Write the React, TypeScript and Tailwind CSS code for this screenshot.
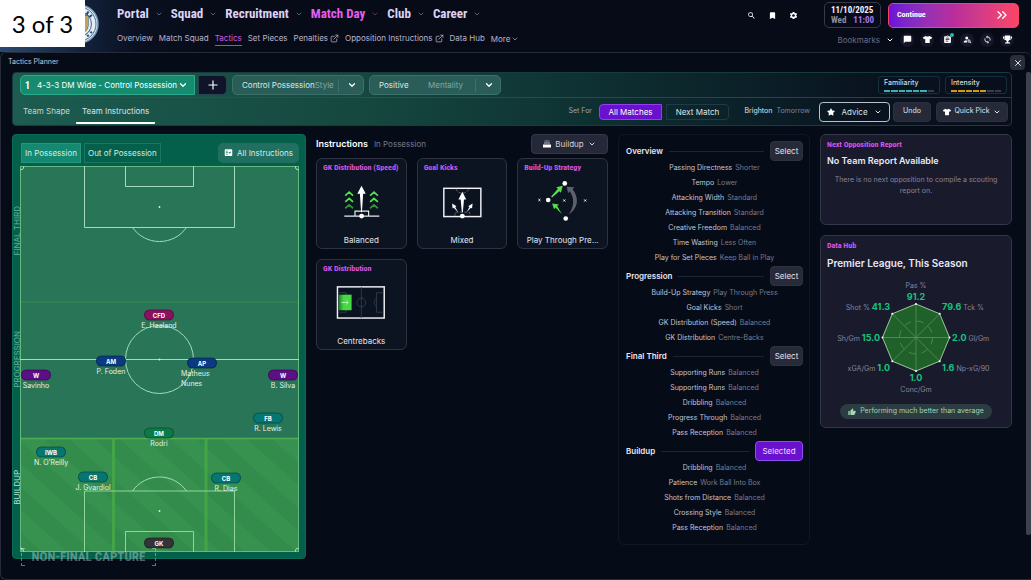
import React from 'react';
import { ChevronDown, ChevronsRight, ExternalLink, Plus, X } from 'lucide-react';
import {
  MdAssignment,
  MdBookmark,
  MdChatBubble,
  MdFactCheck,
  MdOutlineSync,
  MdPersonSearch,
  MdSearch,
  MdSettings,
  MdThumbUp,
} from 'react-icons/md';
import { FaStar, FaTrophy, FaTshirt } from 'react-icons/fa';

const condensed = "font-['Liberation_Sans_Narrow','Roboto_Condensed',sans-serif] font-bold";

const mainNav = ['Portal', 'Squad', 'Recruitment', 'Match Day', 'Club', 'Career'];

const subNav = [
  { label: 'Overview' },
  { label: 'Match Squad' },
  { label: 'Tactics', active: true },
  { label: 'Set Pieces' },
  { label: 'Penalties', external: true },
  { label: 'Opposition Instructions', external: true },
  { label: 'Data Hub' },
];

interface Player {
  role: string;
  name?: string;
  color: string;
  x: number;
  y: number;
  wrap?: boolean;
}

const PITCH_W = 279;
const PITCH_H = 386;

const players: Player[] = [
  { role: 'CFD', name: 'E. Haaland', color: 'bg-[#8a1060]', x: 139, y: 149 },
  { role: 'AM', name: 'P. Foden', color: 'bg-[#0a3a80]', x: 91, y: 195 },
  { role: 'AP', name: 'Matheus Nunes', color: 'bg-[#0a3a80]', x: 182, y: 197, wrap: true },
  { role: 'W', name: 'Savinho', color: 'bg-[#5c0f86]', x: 16, y: 209 },
  { role: 'W', name: 'B. Silva', color: 'bg-[#5c0f86]', x: 263, y: 209 },
  { role: 'FB', name: 'R. Lewis', color: 'bg-[#067672]', x: 248, y: 252 },
  { role: 'DM', name: 'Rodri', color: 'bg-[#0b7a48]', x: 139, y: 267 },
  { role: 'IWB', name: "N. O'Reilly", color: 'bg-[#067672]', x: 31, y: 286 },
  { role: 'CB', name: 'J. Gvardiol', color: 'bg-[#067672]', x: 73, y: 311 },
  { role: 'CB', name: 'R. Dias', color: 'bg-[#067672]', x: 206, y: 312 },
  { role: 'GK', color: 'bg-[#333338]', x: 139, y: 377 },
];

const sections = [
  {
    title: 'Overview',
    rows: [
      ['Passing Directness', 'Shorter'],
      ['Tempo', 'Lower'],
      ['Attacking Width', 'Standard'],
      ['Attacking Transition', 'Standard'],
      ['Creative Freedom', 'Balanced'],
      ['Time Wasting', 'Less Often'],
      ['Play for Set Pieces', 'Keep Ball in Play'],
    ],
  },
  {
    title: 'Progression',
    rows: [
      ['Build-Up Strategy', 'Play Through Press'],
      ['Goal Kicks', 'Short'],
      ['GK Distribution (Speed)', 'Balanced'],
      ['GK Distribution', 'Centre-Backs'],
    ],
  },
  {
    title: 'Final Third',
    rows: [
      ['Supporting Runs', 'Balanced'],
      ['Supporting Runs', 'Balanced'],
      ['Dribbling', 'Balanced'],
      ['Progress Through', 'Balanced'],
      ['Pass Reception', 'Balanced'],
    ],
  },
  {
    title: 'Buildup',
    selected: true,
    rows: [
      ['Dribbling', 'Balanced'],
      ['Patience', 'Work Ball Into Box'],
      ['Shots from Distance', 'Balanced'],
      ['Crossing Style', 'Balanced'],
      ['Pass Reception', 'Balanced'],
    ],
  },
];

const ClubBadge = () => (
  <svg viewBox="0 0 40 40" className="h-10 w-10" aria-hidden="true">
    <circle cx="20" cy="20" r="19" fill="#e4edf5" stroke="#6f9cc4" strokeWidth="1.5" />
    <circle cx="20" cy="20" r="17" fill="none" stroke="#24466f" strokeWidth="0.8" />
    <circle cx="20" cy="20" r="12.5" fill="#dfe9f2" stroke="#24466f" strokeWidth="0.8" />
    <path d="M11 11h18v10c0 5-4 8-9 11-5-3-9-6-9-11z" fill="#86b6dc" stroke="#24466f" />
    <path d="M24 12h5v9c0 4-2 6-5 8z" fill="#c9a24c" />
    <g stroke="#24466f" strokeWidth="2">
      <path d="M25 5.500l-1 3M29.500 7.500l-1.800 2.700M33 11l-2.600 2M21 4.500v3" />
      <path d="M25 34.500l-1-3M29.500 32.500l-1.800-2.700M33 29l-2.600-2" strokeDasharray="2 1" />
    </g>
  </svg>
);

const DateBox = () => (
  <div className={`${condensed} flex h-[26px] w-[57px] flex-col justify-center rounded-[5px] border border-[#343a48] px-1.5 text-[9px] leading-[10px]`}>
    <span className="whitespace-nowrap text-[#f2eefc]">11/10/2025</span>
    <span className="flex justify-between text-[#8d8b9e]">
      Wed <span className="text-[#a377f0]">11:00</span>
    </span>
  </div>
);

const RoundButton: React.FC<{ label: string; badge?: boolean; children: React.ReactNode }> = ({ label, badge, children }) => (
  <button aria-label={label} className="relative flex h-3.5 w-3.5 items-center justify-center rounded-full bg-[#16162a] text-[9px]">
    {children}
    {badge && <span className="absolute top-0 right-0 h-1 w-1 rounded-full bg-[#2bb5ae]" />}
  </button>
);

const Header = () => (
  <header className="flex h-[52px] items-start bg-[linear-gradient(90deg,#2b4a70_0,#13233d_80px,#0a1020_135px,#070b18_220px)]">
    <div className="relative h-[52px] w-[117px] shrink-0">
      <div className="absolute top-1 left-[59px]">
        <ClubBadge />
      </div>
      <div className="relative flex h-[47px] w-[85px] items-center justify-center bg-white font-['Lato',sans-serif] text-[24px] text-black">
        3 of 3
      </div>
    </div>

    <div className="flex min-w-0 flex-1 flex-col">
      <nav className={`${condensed} flex h-7 items-center gap-2 text-[13px]`}>
        {mainNav.map((item) => (
          <a
            key={item}
            href="#"
            className={`flex items-center gap-1.5 whitespace-nowrap ${item === 'Match Day' ? 'text-[#e75cf3]' : 'text-[#dcd3f5]'}`}
          >
            {item}
            <ChevronDown className="h-2 w-2 opacity-60" />
          </a>
        ))}
      </nav>
      <nav className="flex h-[21px] items-center gap-1.5 text-[8px] text-[#b9b4cc]">
        {subNav.map((item) => (
          <a
            key={item.label}
            href="#"
            className={`flex h-[14px] items-center gap-0.5 border-b whitespace-nowrap ${item.active ? 'border-[#a04cbc] text-[#cf5be0]' : 'border-transparent'}`}
          >
            {item.label}
            {item.external && <ExternalLink className="h-[9px] w-[9px]" />}
          </a>
        ))}
        <button className="flex items-center gap-px whitespace-nowrap">
          More <ChevronDown className="h-2 w-2" />
        </button>
      </nav>
    </div>

    <div className="flex shrink-0 flex-col pr-3">
      <div className="flex h-7 items-center pt-0.5 text-white">
        <div className="flex flex-1 gap-3">
          <button aria-label="Search"><MdSearch className="h-[9px] w-[9px]" /></button>
          <button aria-label="Saved"><MdBookmark className="h-[9px] w-[9px]" /></button>
          <button aria-label="Settings"><MdSettings className="h-[9px] w-[9px]" /></button>
        </div>
        <div className="ml-[26px] flex items-center gap-[7px]">
          <DateBox />
          <button className={`${condensed} flex h-[25px] w-[131px] items-center justify-between rounded-[5px] border border-[#f2456d] bg-linear-to-r from-[#6a11d8] via-[#b92d9c] to-[#fb4565] px-2 text-[8px] text-white`}>
            Continue
            <ChevronsRight className="h-4 w-4" strokeWidth={2} />
          </button>
        </div>
      </div>
      <div className="flex h-[23px] items-center justify-end gap-1.5 pr-[5px] text-white">
        <button className="flex items-center gap-1.5 text-[8px] text-[#6d6b80]">
          Bookmarks <ChevronDown className="h-2 w-2 text-white" strokeWidth={3} />
        </button>
        <RoundButton label="Messages"><MdChatBubble /></RoundButton>
        <RoundButton label="Squad"><FaTshirt /></RoundButton>
        <RoundButton label="Reports" badge><MdAssignment /></RoundButton>
        <RoundButton label="Scouting"><MdPersonSearch /></RoundButton>
        <RoundButton label="Refresh"><MdOutlineSync /></RoundButton>
        <RoundButton label="Competitions"><FaTrophy /></RoundButton>
      </div>
    </div>
  </header>
);

const Meter: React.FC<{ label: string; filled: number; color: string }> = ({ label, filled, color }) => (
  <div className="flex h-[18px] w-[62px] flex-col justify-between rounded-[3px] border border-[#14303a] px-[5px] py-px text-[7px] leading-[10px] font-medium text-[#d5d8df]">
    {label}
    <div className="flex gap-px">
      {Array.from({ length: 7 }, (_, i) => (
        <span key={i} className={`h-0.5 flex-1 ${i < filled ? color : 'bg-[#353f4b]'}`} />
      ))}
    </div>
  </div>
);

const LabelledSelect: React.FC<{ id: string; label: string; value: string; spread?: boolean }> = ({ id, label, value, spread }) => (
  <div className="flex h-5 w-[132px] items-center rounded-[5px] border border-[#3c706b] bg-[#2a5d58] pr-1.5 pl-[9px] text-[8px]">
    <div className={`flex flex-1 items-center ${spread ? 'justify-between pr-2' : ''}`}>
      <select id={id} className="appearance-none bg-transparent text-[#dbe9e6] [field-sizing:content]">
        <option>{value}</option>
      </select>
      <label htmlFor={id} className="text-[#83a7a2]">{label}</label>
    </div>
    <span className="mr-2 ml-1 h-[13px] w-px shrink-0 bg-[#3f716c]" />
    <ChevronDown className="h-2.5 w-2.5 shrink-0 text-white" strokeWidth={3} />
  </div>
);

const Toolbar = () => (
  <section className="rounded-[4px] border border-[#173c3e] bg-[linear-gradient(90deg,#1d5c50_0%,#15483f_35%,#0d2c30_62%,#091420_85%,#080e1b_100%)]">
    <div className="flex h-[25px] items-center gap-[5px] border-b border-[#2a5a56]/70 px-1">
      <div className="ml-[3px] flex h-5 w-[175px] items-center rounded-l-[5px] border border-[#2bab8c] bg-[#168b70] pr-1.5 pl-1 text-white">
        <span className={`${condensed} w-3 text-[10px]`}>1</span>
        <select aria-label="Tactic" className="min-w-0 flex-1 appearance-none bg-transparent text-[8px]">
          <option>4-3-3 DM Wide - Control Possession</option>
        </select>
        <ChevronDown className="h-2.5 w-2.5 shrink-0" strokeWidth={3} />
      </div>
      <button aria-label="Add tactic" className="-ml-0.5 flex h-5 w-[29px] items-center justify-center rounded-r-[5px] border border-[#27464c] bg-[#10142a] text-white">
        <Plus className="h-3.5 w-3.5" />
      </button>
      <LabelledSelect id="style" label="Style" value="Control Possession" />
      <LabelledSelect id="mentality" label="Mentality" value="Positive" spread />
      <div className="ml-auto flex gap-[5px]">
        <Meter label="Familiarity" filled={6} color="bg-[#36b3b3]" />
        <Meter label="Intensity" filled={5} color="bg-[#d09a1c]" />
      </div>
    </div>

    <div className="flex h-[27px] items-center pr-[3px] pl-1 text-[8px] text-[#dfe3ea]">
      <div className="flex h-full">
        <button className="flex h-[26px] items-center px-1.5 text-[#c2d6d1]">Team Shape</button>
        <button className="flex h-[26px] items-center rounded-b-[1px] border-b-2 border-white px-1.5 pt-0.5">Team Instructions</button>
      </div>
      <div className="ml-auto flex items-center gap-[5px]">
        <span className="mr-0.5 text-[7px] text-[#9aa5ad]">Set For</span>
        <button className="h-4 w-[63px] rounded-l-[4px] border border-[#8f3ff0] bg-[#6a11cf] text-white">All Matches</button>
        <button className="-ml-px h-4 w-[63px] rounded-r-[4px] border border-[#1f3c46]">Next Match</button>
        <div className="flex w-[80px] items-center justify-end gap-1 pr-1 text-[7px]">
          Brighton <span className="text-[#7c8794]">Tomorrow</span>
        </div>
        <button className="flex h-5 w-[71px] items-center justify-center gap-[6px] rounded-[4px] border border-[#b5c2c9]">
          <FaStar className="h-2 w-2 text-white" /> Advice <ChevronDown className="h-2 w-2" strokeWidth={3} />
        </button>
        <button className="-ml-0.5 h-5 w-[38px] rounded-[4px] border border-[#2b3140] bg-[#262a38] text-[7px]">Undo</button>
        <button className="flex h-5 w-[72px] items-center justify-between rounded-[4px] border border-[#2b3140] bg-[#262a38] px-1.5 text-[7px]">
          <FaTshirt className="h-2 w-2 text-white" /> Quick Pick <ChevronDown className="h-2 w-2" strokeWidth={3} />
        </button>
      </div>
    </div>
  </section>
);

const PitchLines = () => (
  <svg viewBox="0 0 279 386" preserveAspectRatio="none" className="h-full w-full" aria-hidden="true">
    <defs>
      <pattern id="stripes" width="34" height="34" patternUnits="userSpaceOnUse" patternTransform="rotate(-48)">
        <rect width="17" height="34" fill="#3f9a55" fillOpacity="0.45" />
      </pattern>
    </defs>
    <rect width="279" height="386" fill="#287557" />
    <path d="M0 136h279" stroke="#2f8050" strokeWidth="2" />
    <rect y="272" width="279" height="114" fill="#338c4b" />
    <rect y="272" width="279" height="114" fill="url(#stripes)" />
    <path d="M93.500 272v114M186 272v114" stroke="#43a548" strokeWidth="3" />
    <path d="M0 272.500h279" stroke="#4fae51" strokeWidth="1.5" />
    <g fill="none" stroke="#a4dbbd" strokeWidth="1">
      <rect x="0.5" y="0.5" width="278" height="385" stroke="#64b983" />
      <path d="M64.500 0v61.500h150V0M105.500 0v20.500h68V0" />
      <path d="M112.500 61.500a33 33 0 0 0 54 0" />
      <path d="M0 193.500h279" strokeWidth="1.2" />
      <circle cx="139.5" cy="193.5" r="34" />
      <path d="M64.500 386v-61h150v61M105.500 386v-20.500h68V386" stroke="#8ed69c" />
      <path d="M112.500 325a33 33 0 0 1 54 0" />
      <path d="M0 4a4 4 0 0 0 4-4M275 0a4 4 0 0 0 4 4M0 382a4 4 0 0 1 4 4M275 386a4 4 0 0 1 4-4" />
    </g>
    <g fill="#d8f5e2">
      <circle cx="139.5" cy="41" r="0.9" />
      <circle cx="139.5" cy="193.5" r="0.9" />
      <circle cx="139.5" cy="345" r="0.9" />
    </g>
  </svg>
);

const PitchPanel = () => (
  <section className="relative self-start rounded-[4px] border border-[#0c6b54] bg-[#05604b] pr-[6px] pb-[6px]">
    <div className="flex h-[31px] items-center gap-[3px] pl-2 text-[8px] text-[#d5ede4]">
      <button className="mt-1 h-5 border border-[#23977d] bg-[#158870] px-[3px]">In Possession</button>
      <button className="mt-1 h-5 border border-[#1c7762] px-[3px]">Out of Possession</button>
      <button className="mt-1 ml-auto flex h-5 items-center gap-1 rounded-[5px] bg-[#216f60] px-1.5">
        <MdFactCheck className="h-[9px] w-[9px] text-white" /> All Instructions
      </button>
    </div>
    <div className="flex h-[386px]">
      <div className="flex w-[7px] flex-col items-center text-[8px] leading-[8px] text-[#5fae96]">
        {['FINAL THIRD', 'PROGRESSION', 'BUILDUP'].map((zone) => (
          <div key={zone} className={`flex flex-1 items-center ${zone === 'BUILDUP' ? 'text-[#b5e3cf]' : ''}`}>
            <span className="rotate-180 whitespace-nowrap [writing-mode:vertical-rl]">{zone}</span>
          </div>
        ))}
      </div>
      <div className="relative flex-1">
        <PitchLines />
        {players.map((p) => (
          <div
            key={`${p.role}-${p.x}`}
            className="absolute h-[11px] w-[30px] -translate-x-1/2 -translate-y-1/2"
            style={{ left: `${(p.x / PITCH_W) * 100}%`, top: `${(p.y / PITCH_H) * 100}%` }}
          >
            <button className={`flex h-[11px] w-full items-center justify-center rounded-full border border-black/30 text-[6px] font-bold text-white ${p.color}`}>
              {p.role}
            </button>
            {p.name && (
              <div className={`flex text-[7px] leading-[10px] text-[#e2f3ea] ${p.wrap ? '-ml-1.5 w-8' : 'justify-center whitespace-nowrap'}`}>
                {p.name}
              </div>
            )}
          </div>
        ))}
      </div>
    </div>
    <div className={`${condensed} absolute -bottom-2 left-2 flex h-[18px] w-[135px] items-center justify-center text-[13px] whitespace-nowrap text-white/35`}>
      <span className="absolute inset-y-0 left-0 w-1 border border-r-0 border-dashed border-white/40" />
      NON-FINAL CAPTURE
      <span className="absolute inset-y-0 right-0 w-1 border border-l-0 border-dashed border-white/40" />
    </div>
  </section>
);

const SpeedDrawing = () => (
  <svg viewBox="0 0 91 50" className="w-full">
    <g fill="none" stroke="#55e04c" strokeWidth="1.8">
      <path d="M29 15l4-3.500 4 3.500M54.500 15l4-3.500 4 3.500" />
      <path d="M29 21.500l4-3.500 4 3.500M54.500 21.500l4-3.500 4 3.500" />
      <path d="M29 28l4-3.500 4 3.500M54.500 28l4-3.500 4 3.500" opacity="0.6" />
    </g>
    <path d="M28 36h36M39 36v-5h14v5" fill="none" stroke="#e8eaf0" strokeWidth="1.2" />
    <path d="M45.700 5l4.300 8h-2.600l-1.300 19h-.8L44 13h-2.600z" fill="#fff" />
    <circle cx="45.8" cy="36" r="2.5" fill="#fff" />
  </svg>
);

const GoalKickDrawing = () => (
  <svg viewBox="0 0 91 50" className="w-full">
    <rect x="26.5" y="7.5" width="38" height="29" fill="#0b1320" stroke="#f1f1f7" strokeWidth="1.5" />
    <path d="M39 8c1 6 12 6 13 0M38 36v-4h15v4" fill="none" stroke="#5c6370" strokeDasharray="3 1.5" />
    <path d="M45.500 11l4 8h-2.300l-1.200 13h-1l-1.200-13h-2.300z" fill="#fff" />
    <path d="M35 23l4.500 3-1.300.8 3 5.200-4.500-4.500-1.200.8zM56 23l-4.500 3 1.300.8-3 5.200 4.500-4.500 1.200.8z" fill="#fff" />
    <circle cx="45.5" cy="36" r="2.5" fill="#fff" />
  </svg>
);

const BuildUpDrawing = () => (
  <svg viewBox="0 0 91 50" className="w-full">
    <path d="M50 6l8 .5-2 2c7 9 6 19-4 26 6-9 6-17 1-24l-1.500 2z" fill="#5d616e" />
    <path d="M34 16l7-8-1.800-1.500L46 5l-2 7-1.600-1.600L35 17z" fill="#55e04c" />
    <path d="M35 23l7 1-1.800 1.700L45 34l-6.500-6.700L37 29z" fill="#55e04c" />
    <g fill="#fff">
      <circle cx="48" cy="2.5" r="2.4" />
      <circle cx="31" cy="19.5" r="2.4" />
      <circle cx="49" cy="38.5" r="2.4" />
    </g>
    <path d="M21 18.500l2 2m0-2l-2 2M46.500 19l2 2m0-2l-2 2M68 19l2 2m0-2l-2 2" stroke="#fff" />
  </svg>
);

const DistributionDrawing = () => (
  <svg viewBox="0 0 91 50" className="w-full">
    <defs>
      <linearGradient id="zone" x1="0" x2="1">
        <stop offset="0" stopColor="#1f7a30" />
        <stop offset="0.4" stopColor="#46d943" />
      </linearGradient>
    </defs>
    <rect x="21" y="5" width="48" height="32" fill="#0b1320" stroke="#f1f1f7" strokeWidth="1.5" />
    <g fill="none" stroke="#384250" strokeWidth="0.8">
      <path d="M45.500 5v32M22 11h8v20h-8M68 11h-7v20h7M61 17c-3 2-3 6 0 8" />
      <circle cx="45.5" cy="21" r="4.5" />
    </g>
    <rect x="22" y="13" width="13.5" height="16" fill="url(#zone)" />
    <path d="M25 21h7m-2-2l2 2-2 2" fill="none" stroke="#b2f5ac" />
  </svg>
);

const cards = [
  { title: 'GK Distribution (Speed)', value: 'Balanced', drawing: <SpeedDrawing /> },
  { title: 'Goal Kicks', value: 'Mixed', drawing: <GoalKickDrawing /> },
  { title: 'Build-Up Strategy', value: 'Play Through Pre...', drawing: <BuildUpDrawing /> },
  { title: 'GK Distribution', value: 'Centrebacks', drawing: <DistributionDrawing /> },
];

const InstructionsPanel = () => (
  <section>
    <div className="flex h-5 items-center gap-1.5">
      <h2 className="text-[9px] font-semibold text-white">Instructions</h2>
      <span className="text-[8px] text-[#777b8c]">In Possession</span>
      <div className="ml-auto flex h-5 w-[77px] items-center justify-center gap-1 rounded-[4px] border border-[#353846] bg-[#252838] text-[8px] text-[#d4d4df]">
        <svg viewBox="0 0 8 8" className="h-2 w-2" aria-hidden="true">
          <path d="M1.500 1h5" stroke="#8b8e9b" />
          <path d="M1 3h6" stroke="#b9bbc6" />
          <path d="M0 6h8" stroke="#fff" strokeWidth="3" />
        </svg>
        <select aria-label="Phase" className="appearance-none bg-transparent [field-sizing:content]">
          <option>Buildup</option>
        </select>
        <ChevronDown className="h-2 w-2" strokeWidth={3} />
      </div>
    </div>
    <div className="mt-1 grid grid-cols-3 gap-[10px]">
      {cards.map((card) => (
        <button key={card.title} className="flex h-[91px] flex-col rounded-[6px] border border-[#2f3341] bg-[#0d1421] text-left">
          <span className={`${condensed} px-1.5 pt-1 text-[8px] leading-[10px] whitespace-nowrap text-[#d655e8]`}>{card.title}</span>
          <span className="mt-2 block w-full">{card.drawing}</span>
          <span className="mt-auto w-full pb-0.5 text-center text-[8px] leading-[12px] whitespace-nowrap text-[#e4e4ee]">{card.value}</span>
        </button>
      ))}
    </div>
  </section>
);

const SummaryPanel = () => (
  <section className="self-start rounded-[6px] border border-[#0f1828] pt-1.5 pr-1.5 pb-2 pl-[7px]">
    {sections.map((section) => (
      <div key={section.title}>
        <div className="flex h-5 items-center gap-1.5">
          <h3 className="text-[8px] font-semibold text-[#e6e6f2]">{section.title}</h3>
          <span className="h-px flex-1 bg-[#1b2534]" />
          {section.selected ? (
            <button className="h-5 w-12 rounded-[4px] border border-[#8f4cf0] bg-[#6a11cf] text-[8px] text-[#eadcff]">Selected</button>
          ) : (
            <button className="h-5 w-[33px] rounded-[4px] border border-[#2f3240] bg-[#272a39] text-[8px] text-[#e0e0ea]">Select</button>
          )}
        </div>
        <ul>
          {section.rows.map(([name, value], i) => (
            <li key={i} className="flex h-[15px] items-center justify-center gap-[3px] text-[7px] whitespace-nowrap text-[#c4c6d3]">
              {name} <span className="text-[#777b8c]">{value}</span>
            </li>
          ))}
        </ul>
      </div>
    ))}
  </section>
);

const Stat: React.FC<{ x: number; y: number; anchor: 'start' | 'middle' | 'end'; value: string; label: string }> = ({ x, y, anchor, value, label }) => (
  <text x={x} y={y} textAnchor={anchor}>
    {anchor === 'end' && <tspan className="fill-[#858599] text-[7px]">{label} </tspan>}
    <tspan className="fill-[#16c47f] text-[9px] font-bold">{value}</tspan>
    {anchor === 'start' && <tspan className="fill-[#858599] text-[7px]"> {label}</tspan>}
  </text>
);

const RadarChart = () => (
  <svg viewBox="0 0 190 124" className="w-full">
    <path d="M95 28l23.700 9.800 9.800 23.700-9.800 23.700-23.700 9.800-23.700-9.800-9.800-23.700 9.800-23.700z" fill="#1f6128" stroke="#9cc79c" />
    <path d="M95 28v67M61.500 61.500h67M71.300 37.800l47.400 47.400M118.700 37.800l-47.400 47.400" stroke="#5b8f60" strokeWidth="0.8" />
    <circle cx="95" cy="61.5" r="16.5" fill="none" stroke="#5b8f60" strokeWidth="0.8" strokeDasharray="7 6" />
    <g fill="#fff">
      <circle cx="95" cy="28" r="1" />
      <circle cx="118.7" cy="37.8" r="1" />
      <circle cx="128.5" cy="61.5" r="1" />
      <circle cx="118.7" cy="85.2" r="1" />
      <circle cx="95" cy="95" r="1" />
      <circle cx="71.3" cy="85.2" r="1" />
      <circle cx="61.5" cy="61.5" r="1" />
      <circle cx="71.3" cy="37.8" r="1" />
    </g>
    <text x="95" y="12" textAnchor="middle" className="fill-[#858599] text-[7px]">Pas %</text>
    <Stat x={95} y={24} anchor="middle" value="91.2" label="" />
    <Stat x={69} y={34} anchor="end" value="41.3" label="Shot %" />
    <Stat x={121} y={34} anchor="start" value="79.6" label="Tck %" />
    <Stat x={59} y={65} anchor="end" value="15.0" label="Sh/Gm" />
    <Stat x={131} y={65} anchor="start" value="2.0" label="Gl/Gm" />
    <Stat x={69} y={95} anchor="end" value="1.0" label="xGA/Gm" />
    <Stat x={121} y={95} anchor="start" value="1.6" label="Np-xG/90" />
    <Stat x={95} y={105} anchor="middle" value="1.0" label="" />
    <text x="95" y="116" textAnchor="middle" className="fill-[#858599] text-[7px]">Conc/Gm</text>
  </svg>
);

const SidePanels = () => (
  <aside className="flex flex-col gap-[10px]">
    <section className="h-[91px] rounded-[6px] border border-[#34364a] bg-[#1a1a2d] px-1.5 pt-1">
      <h3 className={`${condensed} text-[8px] leading-[12px] text-[#d655e8]`}>Next Opposition Report</h3>
      <p className="mt-1 text-[9px] leading-[12px] font-semibold text-[#e8e8f4]">No Team Report Available</p>
      <p className="mt-[7px] text-center text-[7px] leading-[11px] text-[#85859a]">
        There is no next opposition to compile a scouting report on.
      </p>
    </section>
    <section className="flex flex-col rounded-[6px] border border-[#34364a] bg-[#1a1a2d] pt-1 pb-2">
      <h3 className={`${condensed} px-1.5 text-[8px] leading-[12px] text-[#d655e8]`}>Data Hub</h3>
      <p className="mt-1 px-1.5 text-[10px] leading-[14px] font-semibold text-[#e8e8f4]">Premier League, This Season</p>
      <div className="mt-1.5">
        <RadarChart />
      </div>
      <div className="mt-1 flex h-[15px] items-center gap-1 self-center rounded-full bg-[#2b3c42] px-2 text-[7px] whitespace-nowrap text-[#a5d6b4]">
        <MdThumbUp className="h-2 w-2" /> Performing much better than average
      </div>
    </section>
  </aside>
);

export default function App() {
  return (
    <div className="flex min-h-screen flex-col bg-[#070b18] font-['Inter',sans-serif]">
      <Header />
      <div className="flex flex-1 flex-col rounded-t-[6px] rounded-bl-[6px] border border-r-0 border-[#272b38] bg-[#060b18]">
        <div className="flex h-[19px] items-center justify-between pr-1.5 pl-[7px]">
          <h1 className="text-[7px] text-[#c8c8d6]">Tactics Planner</h1>
          <button aria-label="Close" className="flex h-[15px] w-[15px] items-center justify-center rounded-[4px] bg-[#2a2d3b] text-white">
            <X className="h-2.5 w-2.5" />
          </button>
        </div>
        <div className="flex flex-1">
          <main className="flex min-w-0 flex-1 flex-col gap-2 pr-[14px] pl-[11px]">
            <Toolbar />
            <div className="grid grid-cols-[294fr_292fr_192fr_192fr] gap-[10px]">
              <PitchPanel />
              <InstructionsPanel />
              <SummaryPanel />
              <SidePanels />
            </div>
          </main>
          <div className="w-[5px] pb-11">
            <div className="h-full rounded-[2px] bg-[#3c414d]" />
          </div>
        </div>
      </div>
    </div>
  );
}
